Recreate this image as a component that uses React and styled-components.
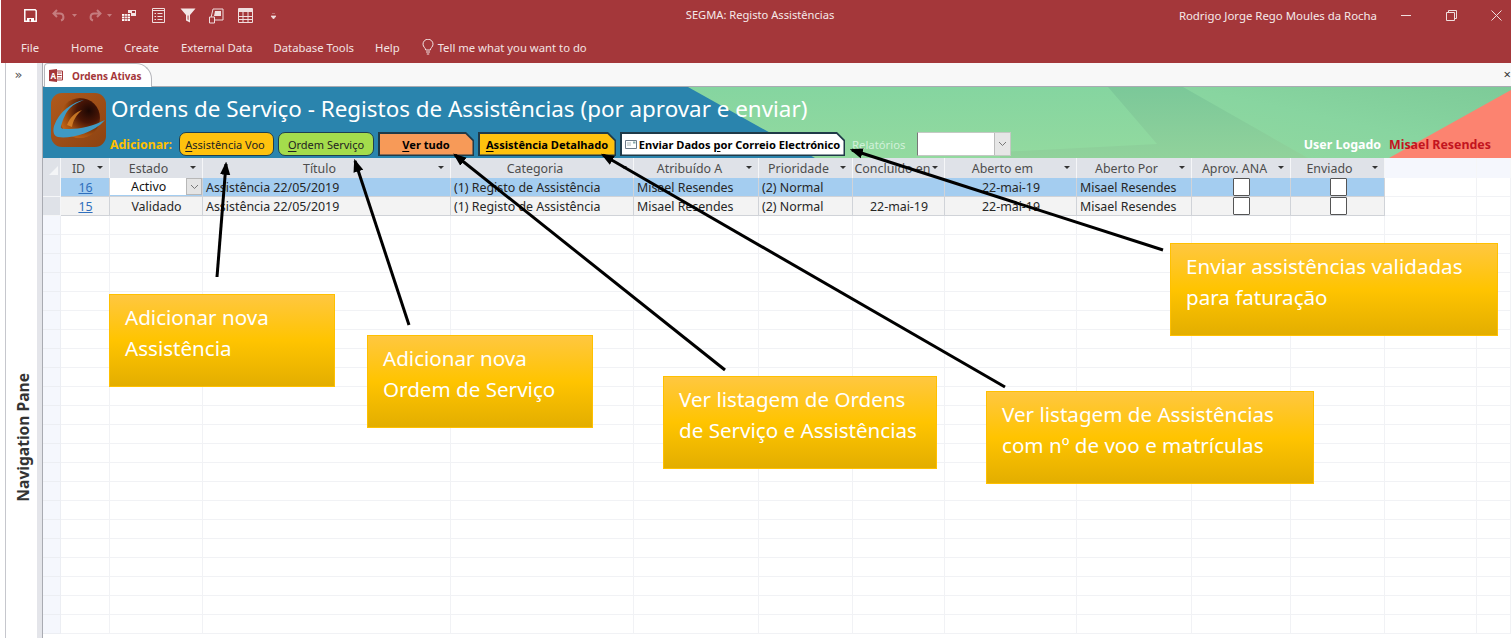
import React from 'react';
import styled, { createGlobalStyle } from 'styled-components';

const Global = createGlobalStyle`
  html, body { margin: 0; padding: 0; height: 100%; overflow: hidden; background: #fff; }
  body { font-family: "Noto Sans", "Open Sans", sans-serif; }
  #root { height: 100%; }
`;

const Page = styled.div`position: relative; width: 1511px; height: 638px; overflow: hidden; display: flex; flex-direction: column;`;
const Ribbon = styled.header`height: 63px; margin-left: 1px; background: #a4373a; color: #fff; display: flex; flex-direction: column; flex: none;`;
const TitleRow = styled.div`height: 31px; display: flex; align-items: center; position: relative;`;
const Qat = styled.div`display: flex; align-items: center;`;
const QatSlot = styled.span`display: inline-flex; justify-content: center; align-items: center; height: 20px; margin-left: ${p => p.$ml}px;`;
const AppTitle = styled.div`position: absolute; left: 0; right: 0; top: 7px; text-align: center; font-size: 11.15px; line-height: 16px; color: #f6e9e9; padding-left: 8px;`;
const UserName = styled.div`margin-left: auto; font-size: 11.4px; color: #f6e9e9;`;
const WinButtons = styled.div`display: flex; margin-left: 24px; margin-right: 9px; gap: 34px; align-items: center;`;
const MenuRow = styled.nav`height: 32px; display: flex; align-items: center; font-size: 11.3px; color: #f3e3e3;`;
const MenuItem = styled.span`margin-left: ${p => p.$ml}px; white-space: nowrap;`;
const AskItem = styled(MenuItem)`display: flex; align-items: center; gap: 4px;`;
const Body = styled.div`flex: 1; display: flex; min-height: 0;`;
const NavPane = styled.aside`flex: none; box-sizing: border-box; background: #fff; display: flex; flex-direction: column; align-items: center; position: relative;
  border-right: 1px solid #a9abb2; box-shadow: inset -5px 0 0 #e4e5ea; border-left: 1px solid #c6c7cd; margin-left: 5px; width: 38px;`;
const Chevrons = styled.div`font-size: 13px; line-height: 14px; margin-top: 5px; margin-right: 11px; color: #555; font-family: "DejaVu Sans", sans-serif;`;
const NavLabel = styled.div`position: absolute; top: 310px; left: 9px; writing-mode: vertical-rl; transform: rotate(180deg); font-weight: 700; font-size: 15.6px; line-height: 17px; color: #333; white-space: nowrap;`;
const Main = styled.main`flex: 1; min-width: 0; display: flex; flex-direction: column;`;
const TabStrip = styled.div`height: 24px; flex: none; background: #f8f8f8; position: relative; display: flex; box-sizing: border-box; border-bottom: 1px solid #a9abb2;`;
const Tab = styled.div`width: 108px; margin-left: 1px; height: 24px; box-sizing: border-box; background: #fff; border: 1px solid #b5b6bb; border-bottom: none; border-radius: 4px 16px 0 0; display: flex; align-items: center; padding-left: 4px; gap: 9px; font-size: 10px; font-weight: 700; color: #a4373a;`;
const CloseX = styled.span`position: absolute; right: 0; top: 4px; font-size: 13px; line-height: 14px; color: #333;`;
const FormHeader = styled.section`height: 71px; flex: none; position: relative; display: flex; padding-left: 8px; background: #8bd6a0; overflow: hidden;`;
const HeaderArt = styled.svg`position: absolute; inset: 0; width: 100%; height: 100%;`;
const LogoBox = styled.div`position: relative; width: 56px; height: 56px; margin-top: 6px; flex: none; svg { display: block; }`;
const HeadCol = styled.div`position: relative; flex: 1; min-width: 0; margin-left: 2px; display: flex; flex-direction: column;`;
const FormTitle = styled.h1`margin: 5px 0 0 2px; height: 40px; font-weight: 400; font-size: 22.4px; line-height: 34px; color: #fff; white-space: nowrap;`;
const Toolbar = styled.div`display: flex; align-items: center; height: 24px; margin-left: 1px;`;
const AddLabel = styled.span`width: 69px; flex: none; font-weight: 700; font-size: 12.3px; color: #ffc000; white-space: nowrap;`;
const RoundBtn = styled.button`width: ${p => p.$w}px; margin-right: 4px; height: 24px; flex: none; padding: 0 ${p => p.$pr || 0}px 0 0; box-sizing: border-box; border: 1.5px solid #1f3f4f; border-radius: 7px; background: ${p => p.$bg}; color: #222; font: 400 11px "Noto Sans", sans-serif; white-space: nowrap;
  u { text-underline-offset: 2px; }`;
const SnipBtn = styled.button`position: relative; width: ${p => p.$w}px; margin-right: ${p => p.$mr}px; height: 24px; flex: none; padding: 0; border: 0; background: #1f3a48; clip-path: polygon(0 0, calc(100% - 8px) 0, 100% 8px, 100% 100%, 0 100%); font: 700 11.1px "Noto Sans", sans-serif; color: #000; white-space: nowrap;
  &::before { content: ""; position: absolute; inset: 1.5px; background: ${p => p.$bg}; clip-path: polygon(0 0, calc(100% - 7.5px) 0, 100% 7.5px, 100% 100%, 0 100%); }
  u { text-underline-offset: 2px; }`;
const SnipText = styled.span`position: relative; display: flex; align-items: center; justify-content: center; gap: 2px;`;
const FaintLabel = styled.span`position: relative; width: 65px; flex: none; font-size: 11.3px; color: #d2f1da;`;
const Combo = styled.div`width: 94px; height: 24px; flex: none; display: flex; box-sizing: border-box; background: #fff; border: 1px solid #c4c9c4; border-left: 1px solid #777;`;
const ComboArrow = styled.div`margin-left: auto; width: 15px; background: #e6e6e6; border-left: 1px solid #bbb; display: flex; align-items: center; justify-content: center;`;
const UserBlock = styled.div`margin-left: auto; margin-right: 20px; display: flex; gap: 8px; font-size: 12.4px; font-weight: 700;`;
const UserTag = styled.span`color: #fff;`;
const UserVal = styled.span`color: #c3141e;`;

const Grid = styled.div`flex: 1; min-height: 0; overflow: hidden; display: flex; flex-direction: column; background: #fff;`;
const Row = styled.div`display: flex; height: ${p => p.$h || 19}px; flex: none;`;
const Cell = styled.div`
  width: ${p => p.$w}px; flex: none; box-sizing: border-box; display: flex; align-items: center; position: relative;
  justify-content: ${p => p.$center ? 'center' : 'flex-start'};
  padding: 0 2px 0 3px; font-size: 12.4px; color: #262626; white-space: nowrap;
  background: ${p => p.$bg}; border-right: 1px solid ${p => p.$line}; border-bottom: 1px solid ${p => p.$line};
`;
const HeadCell = styled.div`
  width: ${p => p.$w}px; flex: none; box-sizing: border-box; display: flex; align-items: center; justify-content: center; position: relative;
  font-size: 12.4px; color: #4d4d4d; white-space: nowrap; background: ${p => p.$bg || '#dfe2e8'}; border-right: 1px solid #f5f6f8; padding: 0 ${p => p.$pr || 0}px 0 0; overflow: hidden;
`;
const SortCaret = styled.i`position: absolute; right: 6px; top: 8px; width: 0; height: 0; border: 3px solid transparent; border-top: 3px solid #333; border-bottom: 0;`;
const Corner = styled.i`position: absolute; left: 6px; bottom: 3px; width: 0; height: 0; border-left: 9px solid transparent; border-bottom: 9px solid #f4f5f7;`;
const LinkNum = styled.span`color: #2f6fbd; text-decoration: underline;`;
const EditBox = styled.div`position: absolute; inset: 0 0 1px 0; background: #fff; display: flex; align-items: center; padding: 0 0 0 21px; color: #111;`;
const EditArrow = styled.div`position: absolute; right: 0; top: 0; bottom: 0; width: 16px; background: #e4e4e4; border: 1px solid #b8b8b8; box-sizing: border-box; display: flex; align-items: center; justify-content: center;`;
const Check = styled.i`width: 17px; height: 18px; background: #fff; border: 1px solid #555; border-radius: 1px; box-sizing: border-box; display: block;`;

const Callout = styled.div`position: absolute; left: ${p => p.$x}px; top: ${p => p.$y}px; width: ${p => p.$w}px; height: ${p => p.$h}px; box-sizing: border-box; padding: 7px 0 0 15px; border: 1px solid #ffc000; background: linear-gradient(#ffc740 0%, #ffc400 50%, #e3ae00 100%); color: #fff; font-size: 20.6px; line-height: 31px; white-space: nowrap;`;
const Arrows = styled.svg`position: absolute; left: 0; top: 0; pointer-events: none;`;

const cols = [
  { k: 'id', w: 49, t: 'ID', pr: 13 },
  { k: 'e', w: 93, t: 'Estado', pr: 15 },
  { k: 't', w: 248, t: 'Título', pr: 14 },
  { k: 'c', w: 183, t: 'Categoria', pr: 14 },
  { k: 'a', w: 125, t: 'Atribuído A', pr: 13 },
  { k: 'p', w: 94, t: 'Prioridade', pr: 14 },
  { k: 'co', w: 92, t: 'Concluído en', pr: 12 },
  { k: 'ab', w: 132, t: 'Aberto em', pr: 16 },
  { k: 'po', w: 115, t: 'Aberto Por', pr: 15 },
  { k: 'an', w: 99, t: 'Aprov. ANA', pr: 13 },
  { k: 'en', w: 94, t: 'Enviado', pr: 16 },
];
const blank = [92, 34];
const rows = [
  { id: '16', e: 'Activo', t: 'Assistência 22/05/2019', c: '(1) Registo de Assistência', a: 'Misael Resendes', p: '(2) Normal', co: '', ab: '22-mai-19', po: 'Misael Resendes', sel: true },
  { id: '15', e: 'Validado', t: 'Assistência 22/05/2019', c: '(1) Registo de Assistência', a: 'Misael Resendes', p: '(2) Normal', co: '22-mai-19', ab: '22-mai-19', po: 'Misael Resendes', sel: false },
];

const Chevron = () => <svg width="9" height="6" viewBox="0 0 9 6"><path d="M1 1l3.5 3.5L8 1" fill="none" stroke="#777" strokeWidth="1" /></svg>;

const s = { fill: 'none', stroke: '#f0dede', strokeWidth: 1 };
const Save = () => <svg width="13" height="13" viewBox="0 0 13 13"><path d="M.8.8h10.4l1 1v10.4H.8z" fill="none" stroke="#fff" strokeWidth="1.5" /><path d="M3 9h7v3.5H3z" fill="#fff" /><path d="M5.5 10h1.5v2.5H5.5z" fill="#a4373a" /></svg>;
const Undo = () => <svg width="14" height="13" viewBox="0 0 14 13"><path d="M5 1L1.5 4.5 5 8M2 4.5h6a3.6 3.6 0 0 1 1 7" fill="none" stroke="#c57c7e" strokeWidth="2" /></svg>;
const Redo = () => <svg width="14" height="13" viewBox="0 0 14 13"><path d="M9 1l3.500 3.500L9 8M12 4.500H6a3.600 3.600 0 0 0-1 7" fill="none" stroke="#c57c7e" strokeWidth="2" /></svg>;
const Tiny = () => <svg width="5" height="3" viewBox="0 0 5 3"><path d="M0 0h5L2.5 3z" fill="#c57c7e" /></svg>;
const Table = () => <svg width="14" height="11" viewBox="0 0 14 11"><path d="M0 4h8v7H0z" fill="#fff" /><path d="M0 6.3h8M0 8.6h8M2.7 4v7M5.3 4v7" stroke="#a4373a" strokeWidth=".7" /><path d="M6 0h8v6H9V3H6z" fill="#f3e3e3" /><path d="M10 1h3v2h-3z" fill="#a4373a" /></svg>;
const ListForm = () => <svg width="13" height="15" viewBox="0 0 13 15"><path d="M.5.5h12v14H.5z" {...s} /><path d="M.5 2.5h12" {...s} /><path d="M2.5 5.5H4M5.5 5.5h5M2.5 8.5H4M5.5 8.5h5M2.5 11.5H4M5.5 11.5h5" {...s} /></svg>;
const Funnel = () => <svg width="16" height="15" viewBox="0 0 16 15"><path d="M.5.5h15L10 7v7.5L6 12.5V7z" fill="#f4e6e6" /><path d="M7.6 7.6h.9V12l-.9-.5z" fill="#a4373a" /></svg>;
const Report = () => <svg width="15" height="16" viewBox="0 0 15 16"><path d="M4 1h10v11H1.500z" {...s} /><path d="M6 3h6v5H5z" fill="#f0dede" /><path d="M0.5 9h5v6h-5z" fill="#a4373a" stroke="#f0dede" /></svg>;
const GridIco = () => <svg width="15" height="15" viewBox="0 0 15 15"><path d="M.5.5h14v14H.5z" {...s} /><path d="M1 1h13v3H1z" fill="#f0dede" /><path d="M0 8.5h15M0 11.5h15" {...s} /><path d="M5 4v11M10 4v11" {...s} /></svg>;
const Bulb = () => <svg width="12" height="16" viewBox="0 0 12 16"><path d="M3.700 11c0-2-2.700-3-2.700-5.800a5 5 0 0 1 10 0C11 8 8.300 9 8.300 11zM4 13h4M4.800 15h2.400" fill="none" stroke="#f3e3e3" strokeWidth="1" /></svg>;
const AccessIco = () => <svg width="14" height="13" viewBox="0 0 14 13"><path d="M7 2h6.500v9H7z" fill="#fff" stroke="#a4373a" /><path d="M8.500 4h4M8.500 6.500h4M8.500 9h4" stroke="#a4373a" /><path d="M0 1l8-1v13l-8-1z" fill="#a4373a" /><text x="1.5" y="9.5" fontSize="8" fontWeight="700" fill="#fff" fontFamily="Noto Sans">A</text></svg>;
const Mail = () => <svg width="12" height="9" viewBox="0 0 12 9"><path d="M.5.5h11v8H.5z" fill="#fff" stroke="#6e7b88" /><path d="M8 1.500h2.500v2H8z" fill="#8aa" /><path d="M2 3h4M2 5h4" stroke="#9aa" strokeWidth=".8" /></svg>;

const Logo = () => (
  <svg width="56" height="56" viewBox="0 0 56 56">
    <defs>
      <linearGradient id="lg" x1="0" y1="0" x2="1" y2="1"><stop offset="0" stopColor="#b05a1c" /><stop offset="1" stopColor="#8c4212" /></linearGradient>
      <radialGradient id="ball" cx=".72" cy=".32" r=".85"><stop offset="0" stopColor="#1c0703" /><stop offset=".35" stopColor="#4a1606" /><stop offset=".7" stopColor="#a24e10" /><stop offset="1" stopColor="#d0701a" /></radialGradient>
    </defs>
    <rect width="55" height="54" rx="11" fill="url(#lg)" />
    <circle cx="29" cy="25" r="20" fill="url(#ball)" />
    <path d="M33 7C22 9 8 18 3 33c-1.500 6 0 10 4 11 9 2 34-2 47-17-12 6-24 9-36 9-6 0-9 0-8-3 2-7 5-14 9-18 4-4 9-6 14-8z" fill="#3f9ac4" />
    <path d="M16 32c3-8 9-13 15-15-6 5-9 11-10 17z" fill="#e08a2a" opacity=".8" />
  </svg>
);

const gridLine = '#f1f2f5';

export default function App() {
  return (
    <Page>
      <Global />
      <Ribbon>
        <TitleRow>
          <Qat>
            <QatSlot $ml={23}><Save /></QatSlot>
            <QatSlot $ml={15}><Undo /></QatSlot>
            <QatSlot $ml={6}><Tiny /></QatSlot>
            <QatSlot $ml={11}><Redo /></QatSlot>
            <QatSlot $ml={5}><Tiny /></QatSlot>
            <QatSlot $ml={10}><Table /></QatSlot>
            <QatSlot $ml={16}><ListForm /></QatSlot>
            <QatSlot $ml={15}><Funnel /></QatSlot>
            <QatSlot $ml={13}><Report /></QatSlot>
            <QatSlot $ml={14}><GridIco /></QatSlot>
            <QatSlot $ml={18}><svg width="5" height="6" viewBox="0 0 5 6"><path d="M1 0h3M0 3h5L2.5 6z" stroke="#f0dede" fill="#f0dede" strokeWidth=".7" /></svg></QatSlot>
          </Qat>
          <AppTitle>SEGMA: Registo Assistências</AppTitle>
          <UserName>Rodrigo Jorge Rego Moules da Rocha</UserName>
          <WinButtons>
            <svg width="11" height="11" viewBox="0 0 11 11"><path d="M0 5.500h10" stroke="#f0dede" /></svg>
            <svg width="11" height="11" viewBox="0 0 11 11"><path d="M.5 2.500h8v8h-8zM2.500 2.500v-2h8v8h-2" fill="none" stroke="#f0dede" /></svg>
            <svg width="11" height="11" viewBox="0 0 11 11"><path d="M.5.5l10 10M10.500.5l-10 10" stroke="#f0dede" /></svg>
          </WinButtons>
        </TitleRow>
        <MenuRow>
          <MenuItem $ml={20}>File</MenuItem>
          <MenuItem $ml={32}>Home</MenuItem>
          <MenuItem $ml={21}>Create</MenuItem>
          <MenuItem $ml={22}>External Data</MenuItem>
          <MenuItem $ml={21}>Database Tools</MenuItem>
          <MenuItem $ml={21}>Help</MenuItem>
          <AskItem $ml={22}><Bulb />Tell me what you want to do</AskItem>
        </MenuRow>
      </Ribbon>
      <Body>
        <NavPane>
          <Chevrons>»</Chevrons>
          <NavLabel>Navigation Pane</NavLabel>
        </NavPane>
        <Main>
          <TabStrip>
            <Tab><AccessIco />Ordens Ativas</Tab>
            <CloseX>×</CloseX>
          </TabStrip>
          <FormHeader>
            <HeaderArt viewBox="0 0 1468 71" preserveAspectRatio="none">
              <defs>
                <linearGradient id="base" x1="0" y1="0" x2="0" y2="1"><stop offset="0" stopColor="#85d5a0" /><stop offset="1" stopColor="#93da9f" /></linearGradient>
                <linearGradient id="topr" x1="0" y1="1" x2="1" y2="0"><stop offset="0" stopColor="#92d99f" /><stop offset=".5" stopColor="#88d5a0" /><stop offset="1" stopColor="#7dca98" /></linearGradient>
                <linearGradient id="dark" x1="0" y1="0" x2="0" y2="1"><stop offset="0" stopColor="#7bc899" /><stop offset="1" stopColor="#91d29b" /></linearGradient>
              </defs>
              <rect x="0" y="0" width="1468" height="71" fill="url(#base)" />
              <polygon points="1140,0 1468,0 1468,71 1265,71" fill="url(#topr)" />
              <polygon points="1065,0 1140,0 1265,71 957,71 957,65 1114,57" fill="url(#dark)" />
              <polygon points="0,0 645,0 772,71 0,71" fill="#2a84ad" />
              <polygon points="1346,71 1468,3 1468,71" fill="#fc8370" />
            </HeaderArt>
            <LogoBox><Logo /></LogoBox>
            <HeadCol>
              <FormTitle>Ordens de Serviço - Registos de Assistências (por aprovar e enviar)</FormTitle>
              <Toolbar>
                <AddLabel>Adicionar:</AddLabel>
                <RoundBtn $w={95} $pr={3} $bg="#ffc20e"><u>A</u>ssistência Voo</RoundBtn>
                <RoundBtn $w={96} $bg="#a4dc4c"><u>O</u>rdem Serviço</RoundBtn>
                <SnipBtn $w={96} $mr={4} $bg="#f79a58"><SnipText><span><u>V</u>er tudo</span></SnipText></SnipBtn>
                <SnipBtn $w={138} $mr={4} $bg="#ffc20e"><SnipText><span><u>A</u>ssistência Detalhado</span></SnipText></SnipBtn>
                <SnipBtn $w={225} $mr={7} $bg="#fff"><SnipText><Mail /><span>Enviar Dados <u>p</u>or Correio Electrónico</span></SnipText></SnipBtn>
                <FaintLabel>Relatórios</FaintLabel>
                <Combo><ComboArrow><Chevron /></ComboArrow></Combo>
                <UserBlock><UserTag>User Logado</UserTag><UserVal>Misael Resendes</UserVal></UserBlock>
              </Toolbar>
            </HeadCol>
          </FormHeader>
          <Grid>
            <Row $h={20}>
              <HeadCell $w={18}><Corner /></HeadCell>
              {cols.map(c => <HeadCell key={c.k} $w={c.w} $pr={c.pr}>{c.t}<SortCaret /></HeadCell>)}
              {blank.map((w, i) => <HeadCell key={i} $w={w} $bg="#f5f7fd" />)}
            </Row>
            {rows.map(r => {
              const bg = r.sel ? '#a4cdf0' : '#f3f3f3';
              const line = '#d0d3d8';
              return (
                <Row key={r.id}>
                  <Cell $w={18} $bg="#dfe2e8" $line="#f5f6f8" />
                  <Cell $w={49} $bg={bg} $line={line} $center><LinkNum>{r.id}</LinkNum></Cell>
                  <Cell $w={93} $bg={bg} $line={line} $center>
                    {r.sel ? <EditBox>{r.e}<EditArrow><Chevron /></EditArrow></EditBox> : r.e}
                  </Cell>
                  <Cell $w={248} $bg={bg} $line={line}>{r.t}</Cell>
                  <Cell $w={183} $bg={bg} $line={line}>{r.c}</Cell>
                  <Cell $w={125} $bg={bg} $line={line}>{r.a}</Cell>
                  <Cell $w={94} $bg={bg} $line={line}>{r.p}</Cell>
                  <Cell $w={92} $bg={bg} $line={line} $center>{r.co}</Cell>
                  <Cell $w={132} $bg={bg} $line={line} $center>{r.ab}</Cell>
                  <Cell $w={115} $bg={bg} $line={line}>{r.po}</Cell>
                  <Cell $w={99} $bg={bg} $line={line} $center><Check /></Cell>
                  <Cell $w={94} $bg={bg} $line={line} $center><Check /></Cell>
                  {blank.map((w, i) => <Cell key={i} $w={w} $bg="#fff" $line={gridLine} />)}
                </Row>
              );
            })}
            {Array.from({ length: 22 }, (_, n) => (
              <Row key={n}>
                <Cell $w={18} $bg="#f5f7fd" $line="#eceef3" />
                {cols.map(c => <Cell key={c.k} $w={c.w} $bg="#fff" $line={gridLine} />)}
                {blank.map((w, i) => <Cell key={i} $w={w} $bg="#fff" $line={gridLine} />)}
              </Row>
            ))}
          </Grid>
        </Main>
      </Body>

      <Arrows width="1511" height="638" viewBox="0 0 1511 638">
        <defs>
          <marker id="ah" markerWidth="4.4" markerHeight="4.4" refX="3.6" refY="2.2" orient="auto" markerUnits="strokeWidth">
            <path d="M0 0.500L4.400 2.200L0 3.900z" fill="#000" />
          </marker>
        </defs>
        {[[217, 277, 226, 164], [409, 325, 355, 161], [725, 370, 455, 155], [1005, 387, 603, 155], [1163, 250, 852, 150]].map((a, i) => (
          <line key={i} x1={a[0]} y1={a[1]} x2={a[2]} y2={a[3]} stroke="#000" strokeWidth="3" markerEnd="url(#ah)" />
        ))}
      </Arrows>

      <Callout $x={109} $y={294} $w={226} $h={93}>Adicionar nova<br />Assistência</Callout>
      <Callout $x={367} $y={335} $w={226} $h={93}>Adicionar nova<br />Ordem de Serviço</Callout>
      <Callout $x={663} $y={376} $w={274} $h={93}>Ver listagem de Ordens<br />de Serviço e Assistências</Callout>
      <Callout $x={986} $y={391} $w={328} $h={93}>Ver listagem de Assistências<br />com nº de voo e matrículas</Callout>
      <Callout $x={1170} $y={243} $w={328} $h={93}>Enviar assistências validadas<br />para faturação</Callout>
    </Page>
  );
}
